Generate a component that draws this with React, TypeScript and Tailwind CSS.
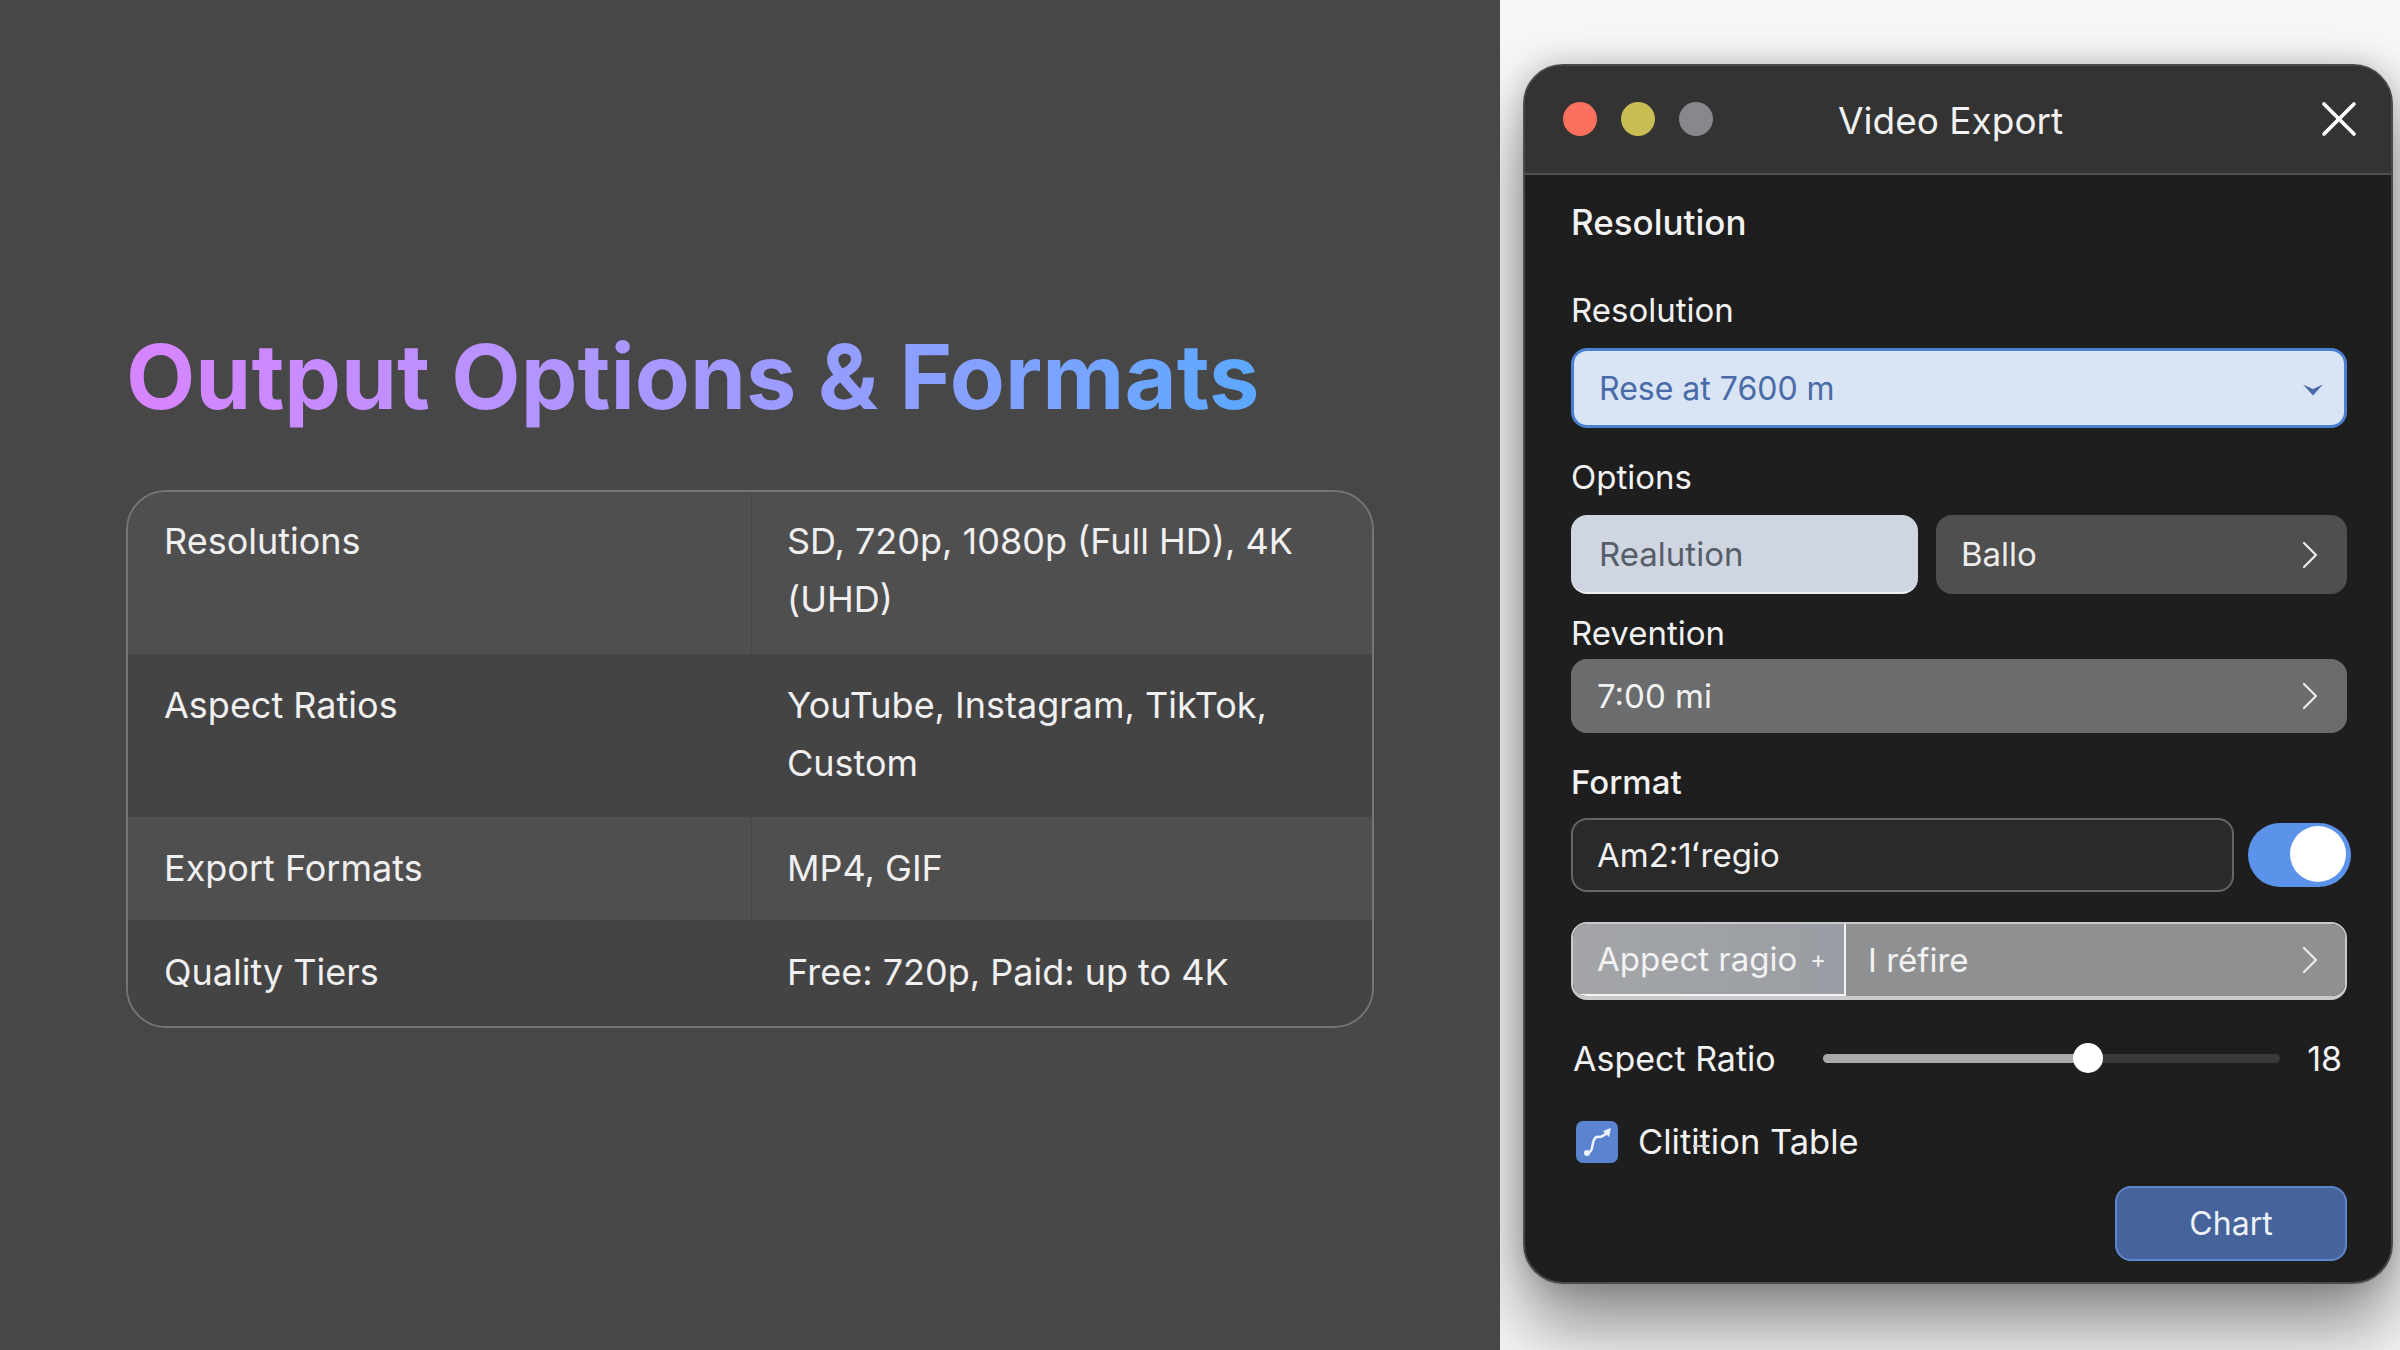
import { ChevronRight, X } from "lucide-react";

const rows = [
  { label: "Resolutions", value: "SD, 720p, 1080p (Full HD), 4K (UHD)", bg: "bg-[#504f50]", h: "h-[162px]", pt: "pt-[21px]" },
  { label: "Aspect Ratios", value: "YouTube, Instagram, TikTok, Custom", bg: "bg-[#454445]", h: "h-[163px]", pt: "pt-[23px]" },
  { label: "Export Formats", value: "MP4, GIF", bg: "bg-[#504f50]", h: "h-[103px]", pt: "pt-[23px]" },
  { label: "Quality Tiers", value: "Free: 720p, Paid: up to 4K", bg: "bg-[#454445]", h: "h-[106px]", pt: "pt-[24px]" },
];

const Chevron = () => <ChevronRight className="w-[48px] h-[48px] text-[#e8e8e8]" strokeWidth={1.15} />;

const App = () => {
  return (
    <div className="flex w-[2400px] h-[1350px] overflow-hidden bg-[#f6f6f6] font-['Inter',sans-serif]">
      {/* Left slide */}
      <div className="relative z-10 w-[1500px] shrink-0 bg-[#484748] pl-[126px] pt-[322px]">
        <h1 className="w-fit text-[90px] leading-[110px] font-bold bg-gradient-to-r from-[#d884ff] to-[#5aa8ff] bg-clip-text text-transparent">
          Output Options &amp; Formats
        </h1>
        <div className="mt-[58px] w-[1248px] h-[538px] rounded-[40px] border-2 border-[#767576] overflow-hidden">
          {rows.map((r) => (
            <div key={r.label} className={`grid grid-cols-[624px_1fr] text-[36px] leading-[57.5px] text-[#f0f0f0] ${r.bg} ${r.h}`}>
              <div className={`pl-[36px] border-r border-[#484748] ${r.pt}`}>{r.label}</div>
              <div className={`pl-[35px] pr-[50px] ${r.pt}`}>{r.value}</div>
            </div>
          ))}
        </div>
      </div>

      {/* Export window */}
      <div className="flex-1 pl-[23px] pt-[64px]">
        <div className="w-[870px] h-[1220px] rounded-[40px] bg-[#1e1e1f] border-2 border-[#4a4a4b] overflow-hidden shadow-[0_44px_70px_rgba(0,0,0,0.42),0_0_30px_rgba(0,0,0,0.2)] text-[#f2f2f2] text-[33px]">
          <div className="relative flex items-center h-[109px] bg-[#333334] border-b-2 border-[#4f4f50] pl-[38px] pr-[22px]">
            <div className="flex gap-[24px] mt-[-2px]">
              <div className="w-[34px] h-[34px] rounded-full bg-[#f9705f]" />
              <div className="w-[34px] h-[34px] rounded-full bg-[#c7bd52]" />
              <div className="w-[34px] h-[34px] rounded-full bg-[#87888c]" />
            </div>
            <div className="ml-[125px] text-[37px] leading-[44px] pt-[2px]">Video Export</div>
            <X className="ml-auto w-[60px] h-[60px] text-white mt-[-2px]" strokeWidth={1.5} />
          </div>

          <div className="pl-[46px] pr-[44px] flex flex-col">
            <div className="mt-[25px] leading-[44px] text-[35px] font-[450]">Resolution</div>
            <div className="mt-[44px] leading-[44px]">Resolution</div>
            <div className="mt-[16px] flex items-center justify-between h-[80px] rounded-[16px] bg-[#d9e4f5] border-[3px] border-[#4b7fd0] pl-[25px] pr-[20px] text-[#4a6aa8] text-[32px]">
              <span className="pt-[2px]">Rese at 7600 m</span>
              <svg viewBox="0 0 20 14" className="w-[22px] h-[16px] mt-[3px]">
                <path d="M1 2 L10 12 L19 2 L10 6 Z" fill="#4a6aa8" />
              </svg>
            </div>

            <div className="mt-[27px] leading-[44px]">Options</div>
            <div className="mt-[16px] flex gap-[18px]">
              <div className="flex items-center w-[347px] h-[79px] rounded-[16px] bg-[#cfd6e2] border-b-2 border-[#eef0f4] pl-[28px] pt-[3px] text-[#575d69]">
                Realution
              </div>
              <div className="flex items-center justify-between flex-1 h-[79px] rounded-[16px] bg-[#4f4f4f] pl-[25px] pr-[13px] text-[#ececec]">
                <span>Ballo</span>
                <Chevron />
              </div>
            </div>

            <div className="mt-[17px] leading-[44px]">Revention</div>
            <div className="mt-[4px] flex items-center justify-between h-[74px] rounded-[16px] bg-[#6a6c6e] pl-[26px] pr-[13px]">
              <span className="pt-[2px]">7:00 mi</span>
              <Chevron />
            </div>

            <div className="mt-[27px] leading-[44px] font-[450]">Format</div>
            <div className="mt-[14px] flex items-center justify-between">
              <div className="flex items-center w-[663px] h-[74px] rounded-[16px] bg-[#2a2a2a] border-2 border-[#666666] pl-[24px] pt-[2px]">
                Am2:1ʻregio
              </div>
              <div className="relative w-[103px] h-[64px] mr-[-4px] rounded-full bg-[#5b93ea]">
                <div className="absolute right-[5px] top-[3px] w-[56px] h-[56px] rounded-full bg-white" />
              </div>
            </div>

            <div className="mt-[30px] flex h-[78px] rounded-[16px] border-2 border-b-[4px] border-[#c9cacc] overflow-hidden">
              <div className="flex items-center w-[273px] bg-gradient-to-r from-[#a3a5a8] to-[#9a9da3] border-r-2 border-b-2 border-[#f4f4f4] pl-[24px] pt-[2px]">
                <span>Appect ragio</span>
                <span className="ml-[13px] text-[24px]">+</span>
              </div>
              <div className="flex flex-1 items-center justify-between bg-[#8f9092] pl-[22px] pr-[11px]">
                <span className="pt-[2px]">I réfire</span>
                <Chevron />
              </div>
            </div>

            <div className="mt-[36px] flex items-center h-[44px] text-[34px]">
              <span className="ml-[2px] w-[250px] shrink-0">Aspect Ratio</span>
              <div className="relative w-[457px] h-[9px] rounded-full bg-[#3a3a3a]">
                <div className="w-[265px] h-full rounded-full bg-[#a9a9a9]" />
                <div className="absolute left-[250px] top-[-11px] w-[30px] h-[30px] rounded-full bg-white" />
              </div>
              <span className="ml-auto mr-[5px]">18</span>
            </div>

            <div className="mt-[36px] flex items-center text-[34.5px]">
              <div className="ml-[5px] flex items-center justify-center w-[42px] h-[42px] rounded-[7px] bg-[#5b84d0]">
                <svg viewBox="0 0 42 42" className="w-[42px] h-[42px]" fill="none">
                  <path d="M10 33 C16 32 16 27 17 22 C18 17 20 15 24 16 C27 16 29 13 33 11" stroke="#eef3fc" strokeWidth="2.5" strokeLinecap="round" />
                  <path d="M27 10 L35 7 L33 16 Z" fill="#eef3fc" />
                  <circle cx="11" cy="32" r="3" fill="#eef3fc" />
                </svg>
              </div>
              <span className="ml-[20px]">
                <span className="relative">
                  Cliti
                  <span className="absolute right-[-9px] top-[24px] w-[16px] h-[2px] bg-[#c8c8c8]" />
                </span>
                tion Table
              </span>
            </div>

            <div className="mt-[18px] self-end flex items-center justify-center w-[232px] h-[75px] rounded-[16px] bg-[#47639c] border-2 border-[#5e86cf] pt-[2px] text-[#eef2fa] text-[32px]">
              Chart
            </div>
          </div>
        </div>
      </div>
    </div>
  );
};

export default App;
